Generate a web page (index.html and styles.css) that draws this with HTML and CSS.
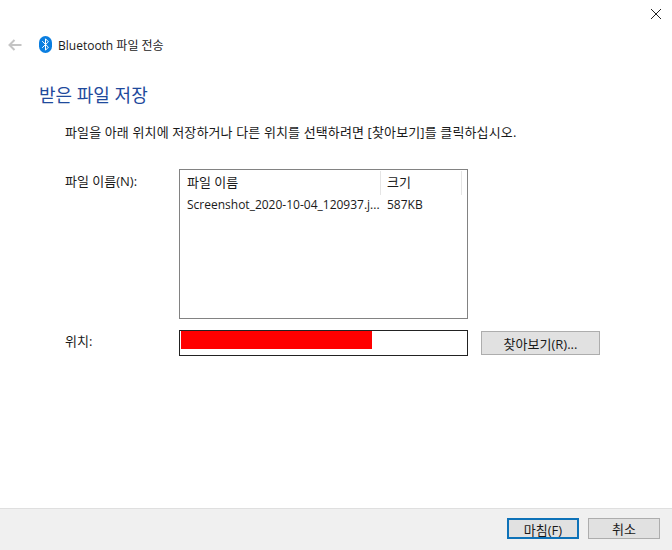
FILE: index.html
```html
<!DOCTYPE html>
<html lang="ko">
<head>
    <meta charset="UTF-8">
    <meta name="viewport" content="width=device-width, initial-scale=1.0">
    <title>Bluetooth 파일 전송</title>
    <link rel="stylesheet" href="styles.css">
</head>
<body>
    <div class="wizard">
        <div class="close-row">
            <svg class="close-icon" width="10" height="10" viewBox="0 0 10 10">
                <path d="M0 0L10 10M10 0L0 10" stroke="#222" stroke-width="1" fill="none"/>
            </svg>
        </div>
        <div class="title-row">
            <svg class="back-icon" width="14" height="12" viewBox="0 0 14 12">
                <path d="M6.5 1L1.5 6L6.5 11M1.5 6H13.5" stroke="#c4c4c4" stroke-width="2" fill="none"/>
            </svg>
            <svg class="bt-icon" width="13" height="17" viewBox="0 0 13 17">
                <rect x="0" y="0" width="13" height="17" rx="6.5" fill="#0a7ee0"/>
                <path d="M3.2 5.2L9.4 11.2L6.5 14.2V2.8L9.4 5.8L3.2 11.8" stroke="#fff" stroke-width="1" fill="none"/>
            </svg>
            <span class="title-text">Bluetooth 파일 전송</span>
        </div>
        <div class="content">
            <h1>받은 파일 저장</h1>
            <p class="intro">파일을 아래 위치에 저장하거나 다른 위치를 선택하려면 [찾아보기]를 클릭하십시오.</p>
            <div class="field-row files">
                <label>파일 이름(N):</label>
                <div class="list-box">
                    <div class="list-head">
                        <span class="col-name">파일 이름</span>
                        <span class="col-size">크기</span>
                    </div>
                    <div class="list-item">
                        <span class="col-name">Screenshot_2020-10-04_120937.j...</span>
                        <span class="col-size">587KB</span>
                    </div>
                </div>
            </div>
            <div class="field-row location">
                <label>위치:</label>
                <div class="path-box"><div class="redacted"></div></div>
                <button type="button" class="btn browse">찾아보기(R)...</button>
            </div>
        </div>
        <div class="footer">
            <button type="button" class="btn primary">마침(F)</button>
            <button type="button" class="btn">취소</button>
        </div>
    </div>
</body>
</html>
```

FILE: styles.css
```css
html, body {
    margin: 0;
    height: 100%;
}
body {
    font-family: "Open Sans", "Noto Sans CJK KR", sans-serif;
    font-size: 12px;
    color: #1a1a1a;
    background-color: white;
}
.wizard {
    height: 550px;
    display: flex;
    flex-direction: column;
    overflow: hidden;
}
.close-row {
    height: 21px;
    padding: 9px 11px 0 0;
    display: flex;
    justify-content: flex-end;
}
.title-row {
    height: 17px;
    margin-top: 6px;
    padding-left: 8px;
    display: flex;
    align-items: center;
}
.bt-icon {
    margin-left: 17px;
}
.title-text {
    margin-left: 6px;
}
.content {
    flex: 1;
    padding-left: 39px;
}
h1 {
    margin: 30px 0 0;
    height: 24px;
    line-height: 24px;
    font-size: 18px;
    font-weight: normal;
    color: #1f4a9c;
}
.intro {
    margin: 16px 0 0 26px;
    height: 18px;
    line-height: 18px;
    font-size: 13px;
    letter-spacing: 0.13px;
}
.field-row {
    display: flex;
    align-items: flex-start;
}
.field-row label {
    width: 114px;
    margin-left: 26px;
    flex-shrink: 0;
    font-size: 13px;
}
.files {
    margin-top: 28px;
}
.files label {
    padding-top: 3px;
    line-height: 18px;
}
.list-box {
    width: 287px;
    height: 148px;
    border: 1px solid #828282;
}
.list-head {
    display: flex;
    height: 24px;
    margin-top: 1px;
    line-height: 22px;
    font-size: 13px;
}
.list-item {
    display: flex;
    height: 18px;
    margin-top: 1px;
    line-height: 18px;
}
.col-name {
    width: 201px;
    padding-left: 7px;
    box-sizing: border-box;
    white-space: nowrap;
}
.list-head .col-name {
    border-right: 1px solid #e5e5e5;
}
.col-size {
    width: 81px;
    padding-left: 6px;
    box-sizing: border-box;
}
.list-head .col-size {
    border-right: 1px solid #e5e5e5;
}
.location {
    margin-top: 11px;
}
.location label {
    line-height: 22px;
}
.path-box {
    width: 286px;
    height: 24px;
    border: 1px solid #222;
    padding-left: 1px;
    margin-right: 13px;
    flex-shrink: 0;
}
.redacted {
    width: 191px;
    height: 18px;
    background-color: #ff0000;
}
.btn {
    width: 72px;
    height: 21px;
    padding: 0;
    font: inherit;
    font-size: 13px;
    color: #1a1a1a;
    background-color: #e1e1e1;
    border: 1px solid #adadad;
    box-sizing: border-box;
}
.browse {
    width: 119px;
    height: 24px;
    margin-top: 1px;
}
.footer {
    height: 42px;
    padding: 9px 12px 0 0;
    box-sizing: border-box;
    background-color: #f0f0f0;
    border-top: 1px solid #dfdfdf;
    display: flex;
    justify-content: flex-end;
    gap: 9px;
}
.primary {
    border: 2px solid #0e72b8;
}
```
